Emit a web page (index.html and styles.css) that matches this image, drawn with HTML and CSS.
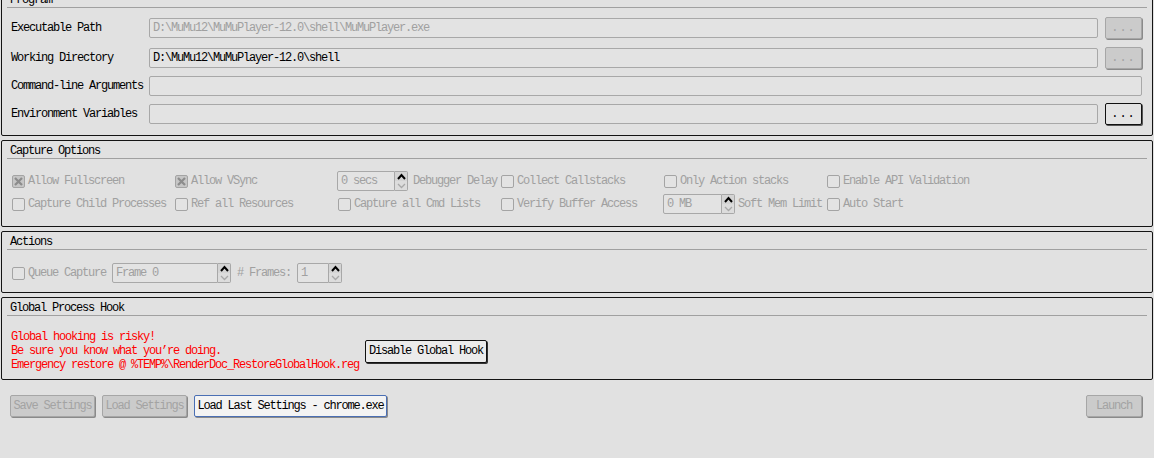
FILE: index.html
```html
<!DOCTYPE html>
<html>
<head>
<meta charset="utf-8">
<link rel="stylesheet" href="styles.css">
</head>
<body>
<div class="page">
  <section class="group group-program">
    <div class="group-title">Program</div>
    <div class="prog-rows">
      <div class="prog-row first">
        <span class="prog-label">Executable Path</span>
        <div class="field disabled">D:\MuMu12\MuMuPlayer-12.0\shell\MuMuPlayer.exe</div>
        <button class="btn btn-dots disabled">...</button>
      </div>
      <div class="prog-row">
        <span class="prog-label">Working Directory</span>
        <div class="field">D:\MuMu12\MuMuPlayer-12.0\shell</div>
        <button class="btn btn-dots disabled">...</button>
      </div>
      <div class="prog-row">
        <span class="prog-label">Command-line Arguments</span>
        <div class="field"></div>
      </div>
      <div class="prog-row">
        <span class="prog-label">Environment Variables</span>
        <div class="field"></div>
        <button class="btn btn-dots enabled">...</button>
      </div>
    </div>
  </section>

  <section class="group group-capture">
    <div class="group-title">Capture Options</div>
    <div class="cap-grid">
      <label class="check dis"><span class="box checked"><svg width="11" height="11" viewBox="0 0 11 11"><path d="M2 2 L9 9 M9 2 L2 9" stroke="#8c8c8c" stroke-width="2.2"/></svg></span>Allow Fullscreen</label>
      <label class="check dis"><span class="box checked"><svg width="11" height="11" viewBox="0 0 11 11"><path d="M2 2 L9 9 M9 2 L2 9" stroke="#8c8c8c" stroke-width="2.2"/></svg></span>Allow VSync</label>
      <div class="spin-cell">
        <div class="spin w71"><div class="spin-text">0 secs</div><div class="spin-arrows"><span class="arr up"><svg width="11" height="9" viewBox="0 0 11 9"><path d="M2 7 L5.5 3 L9 7" fill="none" stroke="#000" stroke-width="2"/></svg></span><span class="arr down"><svg width="11" height="9" viewBox="0 0 11 9"><path d="M2 3 L5.5 6.5 L9 3" fill="none" stroke="#a8a8a8" stroke-width="1.3"/></svg></span></div></div>
        <span class="dis-text">Debugger Delay</span>
      </div>
      <label class="check dis"><span class="box"></span>Collect Callstacks</label>
      <label class="check dis"><span class="box"></span>Only Action stacks</label>
      <label class="check dis"><span class="box"></span>Enable API Validation</label>

      <label class="check dis"><span class="box"></span>Capture Child Processes</label>
      <label class="check dis"><span class="box"></span>Ref all Resources</label>
      <label class="check dis"><span class="box"></span>Capture all Cmd Lists</label>
      <label class="check dis"><span class="box"></span>Verify Buffer Access</label>
      <div class="spin-cell tight">
        <div class="spin w72"><div class="spin-text">0 MB</div><div class="spin-arrows"><span class="arr up"><svg width="11" height="9" viewBox="0 0 11 9"><path d="M2 7 L5.5 3 L9 7" fill="none" stroke="#000" stroke-width="2"/></svg></span><span class="arr down"><svg width="11" height="9" viewBox="0 0 11 9"><path d="M2 3 L5.5 6.5 L9 3" fill="none" stroke="#a8a8a8" stroke-width="1.3"/></svg></span></div></div>
        <span class="dis-text">Soft Mem Limit</span>
      </div>
      <label class="check dis"><span class="box"></span>Auto Start</label>
    </div>
  </section>

  <section class="group group-actions">
    <div class="group-title">Actions</div>
    <div class="act-row">
      <label class="check dis"><span class="box"></span>Queue Capture</label>
      <div class="spin w119"><div class="spin-text">Frame 0</div><div class="spin-arrows"><span class="arr up"><svg width="11" height="9" viewBox="0 0 11 9"><path d="M2 7 L5.5 3 L9 7" fill="none" stroke="#000" stroke-width="2"/></svg></span><span class="arr down"><svg width="11" height="9" viewBox="0 0 11 9"><path d="M2 3 L5.5 6.5 L9 3" fill="none" stroke="#a8a8a8" stroke-width="1.3"/></svg></span></div></div>
      <span class="dis-text">#&nbsp;Frames:</span>
      <div class="spin w45"><div class="spin-text">1</div><div class="spin-arrows"><span class="arr up"><svg width="11" height="9" viewBox="0 0 11 9"><path d="M2 7 L5.5 3 L9 7" fill="none" stroke="#000" stroke-width="2"/></svg></span><span class="arr down"><svg width="11" height="9" viewBox="0 0 11 9"><path d="M2 3 L5.5 6.5 L9 3" fill="none" stroke="#a8a8a8" stroke-width="1.3"/></svg></span></div></div>
    </div>
  </section>

  <section class="group group-hook">
    <div class="group-title">Global Process Hook</div>
    <div class="hook-row">
      <div class="warn">
        <div class="warn-line">Global hooking is risky!</div>
        <div class="warn-line">Be sure you know what you’re doing.</div>
        <div class="warn-line">Emergency restore @ %TEMP%\RenderDoc_RestoreGlobalHook.reg</div>
      </div>
      <button class="btn btn-hook">Disable Global Hook</button>
    </div>
  </section>

  <div class="bottom-row">
    <button class="btn btn-bottom disabled w85">Save Settings</button>
    <button class="btn btn-bottom disabled w85">Load Settings</button>
    <button class="btn btn-bottom focus">Load Last Settings - chrome.exe</button>
    <span class="spacer"></span>
    <button class="btn btn-bottom disabled w56">Launch</button>
  </div>
</div>
</body>
</html>
```

FILE: styles.css
```css
* { box-sizing: border-box; }
html, body {
  margin: 0;
  padding: 0;
  background: #e1e1e1;
  overflow: hidden;
}
body {
  font-family: "Liberation Mono", "DejaVu Sans Mono", monospace;
  font-size: 12px;
  letter-spacing: -1.2px;
  color: #000;
  width: 1154px;
  height: 458px;
}
.page {
  display: flex;
  flex-direction: column;
  gap: 4px;
  padding: 0 1px;
}
.group {
  border: 1px solid #141414;
  border-radius: 2px;
  padding: 0 5px;
}
.group-program { margin-top: -11px; }
.group-title {
  padding: 4px 3px 0;
  line-height: 13px;
  height: 18px;
  border-bottom: 1px solid #a0a0a0;
}

/* Program rows */
.prog-rows {
  display: flex;
  flex-direction: column;
  gap: 6px;
  padding: 9px 5px 10px 4px;
}
.prog-row {
  display: flex;
  align-items: center;
  height: 22px;
}
.prog-row.first { margin-bottom: 2px; }
.prog-label {
  width: 138px;
  flex: none;
  white-space: pre;
}
.field {
  flex: 1;
  height: 20px;
  line-height: 18px;
  border: 1px solid #a8a8a8;
  border-radius: 2px;
  background: #e3e3e3;
  padding: 0 3px;
  white-space: pre;
  overflow: hidden;
  color: #000;
}
.field.disabled { color: #a0a0a0; }

.btn {
  font-family: inherit;
  font-size: inherit;
  letter-spacing: inherit;
  margin: 0;
  padding: 0;
  border-radius: 2px;
  white-space: pre;
  cursor: default;
}
.btn-dots {
  width: 37px;
  height: 22px;
  margin-left: 7px;
  flex: none;
  line-height: 18px;
  letter-spacing: 1px;
}
.btn.disabled {
  background: #cbcbcb;
  color: #a3a3a3;
  border: 1px solid #a6a6a6;
  box-shadow: 1px 1px 0 #8a8a8a;
}
.btn.enabled {
  background: #e3e3e3;
  color: #000;
  border: 1px solid #111;
  box-shadow: 1px 1px 0 #555;
}

/* Capture grid */
.cap-grid {
  display: grid;
  grid-template-columns: repeat(6, 163px);
  grid-auto-rows: 20px;
  row-gap: 3px;
  padding: 12px 0 12px 5px;
}
.check {
  display: flex;
  align-items: center;
  gap: 3px;
  white-space: pre;
}
.check.dis, .dis-text { color: #a0a0a0; }
.dis-text { white-space: pre; }
.box {
  width: 13px;
  height: 13px;
  flex: none;
  border: 1px solid #a4a4a4;
  border-radius: 2px;
  background: #e3e3e3;
  display: flex;
  align-items: center;
  justify-content: center;
}
.box.checked { background: #c6c6c6; }
.box svg { display: block; }

.spin-cell {
  display: flex;
  align-items: center;
  gap: 5px;
  margin-left: -1px;
}
.spin-cell.tight { gap: 3px; }
.spin {
  display: flex;
  height: 20px;
  flex: none;
}
.w71 { width: 71px; }
.w72 { width: 72px; }
.w119 { width: 119px; }
.w45 { width: 45px; }
.spin-text {
  flex: 1;
  border: 1px solid #a8a8a8;
  border-radius: 2px 0 0 2px;
  background: #e3e3e3;
  color: #a0a0a0;
  line-height: 18px;
  padding: 0 3px;
  white-space: pre;
  overflow: hidden;
}
.spin-arrows {
  width: 13px;
  flex: none;
  display: flex;
  flex-direction: column;
  border: 1px solid #a8a8a8;
  border-left: none;
  border-radius: 0 2px 2px 0;
  background: #dcdcdc;
}
.arr {
  flex: 1;
  display: flex;
  align-items: center;
  justify-content: center;
}
.arr svg { display: block; }
.arr.up { background: #d4d4d4; }

/* Actions */
.act-row {
  display: flex;
  align-items: center;
  gap: 6px;
  height: 20px;
  margin: 13px 0 9px 5px;
}

/* Hook */
.hook-row {
  display: flex;
  align-items: center;
  gap: 6px;
  padding: 14px 0 7px 4px;
}
.warn {
  color: #ff0000;
  line-height: 14px;
  flex: none;
}
.warn-line { white-space: pre; }
.btn-hook {
  height: 23px;
  padding: 0 3px;
  background: #ebebeb;
  border: 1px solid #111;
  box-shadow: 1px 1px 0 #333;
  color: #000;
  line-height: 19px;
}

/* Bottom */
.bottom-row {
  display: flex;
  align-items: center;
  gap: 7px;
  margin-top: 11px;
  padding: 0 11px 0 9px;
}
.btn-bottom {
  height: 22px;
  line-height: 18px;
  padding: 0 2px;
}
.w85 { width: 85px; }
.w56 { width: 56px; }
.btn.focus {
  width: 193px;
  background: #f3f3f3;
  color: #000;
  border: 1px solid #4a6fb4;
  box-shadow: 1px 1px 0 #8a8a8a;
}
.spacer { flex: 1; }
```
